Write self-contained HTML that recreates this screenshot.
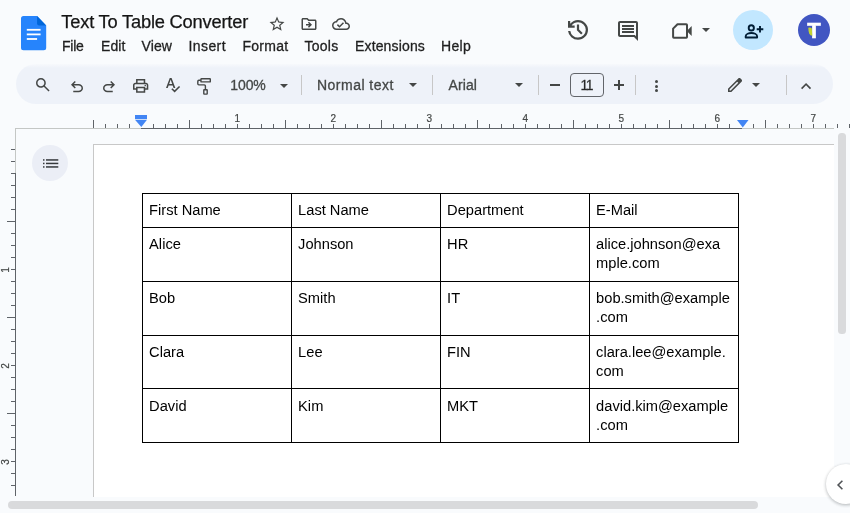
<!DOCTYPE html>
<html><head><meta charset="utf-8"><title>Text To Table Converter</title>
<style>
*{box-sizing:border-box;margin:0;padding:0}
html,body{width:850px;height:513px;overflow:hidden;background:#f9fbfd}
body{font-family:"Liberation Sans",sans-serif;color:#1f1f1f;position:relative}
#root{position:absolute;left:0;top:0;width:850px;height:513px;overflow:hidden;will-change:transform}
.a{position:absolute;white-space:nowrap}
svg{position:absolute;overflow:visible}
.menu{top:37px;font-size:14px;line-height:18px;color:#1f1f1f;-webkit-text-stroke:0.3px #1f1f1f}
.tb{top:76px;font-size:14px;line-height:18px;color:#444746;-webkit-text-stroke:0.3px #444746}
.sep{width:1px;height:20px;background:#c7c7c7;top:75px}
.ln{background:#000}
#tbl{position:absolute;left:142px;top:193px;width:597px;border-collapse:collapse;table-layout:fixed;font-size:14.6667px;line-height:19px;color:#000}
#tbl col{width:149px}
#tbl td{border:1px solid #000;padding:0 0 0 6.1px;vertical-align:top;white-space:nowrap;overflow:hidden}
.rn{font-size:10px;line-height:10px;color:#444746;-webkit-text-stroke:0.2px #444746}
</style></head><body><div id="root">
<svg style="left:21.400px;top:16px" width="25.200" height="34.200" viewBox="0 0 25.200 34.200">
<path d="M2.500 0H16.100L25.200 9.500V31.700A2.500 2.500 0 0 1 22.700 34.200H2.500A2.500 2.500 0 0 1 0 31.700V2.500A2.500 2.500 0 0 1 2.500 0Z" fill="#2684fc"/>
<path d="M16.100 0L25.200 9.500H18.100A2 2 0 0 1 16.100 7.500Z" fill="#0066da"/>
<rect x="5.800" y="12.900" width="13.800" height="1.800" fill="#fff"/><rect x="5.800" y="17.500" width="13.800" height="1.800" fill="#fff"/><rect x="5.800" y="22.100" width="10.300" height="1.800" fill="#fff"/>
</svg>
<div class="a" id="title" style="left:61.300px;top:10px;font-size:18.300px;line-height:24px;color:#151515;letter-spacing:-0.200px;-webkit-text-stroke:0.25px #151515">Text To Table Converter</div>
<div class="a menu" style="left:62px;letter-spacing:-0.265px">File</div>
<div class="a menu" style="left:101px;letter-spacing:0.093px">Edit</div>
<div class="a menu" style="left:141.5px;letter-spacing:0.103px">View</div>
<div class="a menu" style="left:188.5px;letter-spacing:0.413px">Insert</div>
<div class="a menu" style="left:242.5px;letter-spacing:0.243px">Format</div>
<div class="a menu" style="left:304.5px;letter-spacing:0.262px">Tools</div>
<div class="a menu" style="left:355px;letter-spacing:0.152px">Extensions</div>
<div class="a menu" style="left:441px;letter-spacing:0.300px">Help</div>
<svg style="left:268px;top:15px" width="18" height="18" viewBox="0 0 24 24"><path fill="#444746" d="M22 9.24l-7.190-.62L12 2 9.190 8.630 2 9.240l5.460 4.730L5.820 21 12 17.270 18.180 21l-1.630-7.030L22 9.240zM12 15.400l-3.760 2.270 1-4.280-3.320-2.880 4.380-.38L12 6.100l1.710 4.040 4.380.38-3.320 2.880 1 4.280L12 15.400z"/></svg>
<svg style="left:300px;top:15px" width="18" height="18" viewBox="0 0 24 24"><path fill="#444746" d="M20,6h-8l-2-2H4C2.900,4,2,4.900,2,6v12c0,1.100,0.900,2,2,2h16c1.100,0,2-0.900,2-2V8C22,6.900,21.100,6,20,6z M20,18H4V6h5.170l2,2H20V18z M12.160,12H8v2h4.160l-1.590,1.590L11.990,17L16,13.010L11.990,9l-1.410,1.410L12.160,12z"/></svg>
<svg style="left:332px;top:15px" width="18" height="18" viewBox="0 0 24 24"><path fill="#444746" d="M19.350 10.040C18.670 6.590 15.640 4 12 4 9.110 4 6.600 5.640 5.350 8.040 2.340 8.360 0 10.910 0 14c0 3.310 2.690 6 6 6h13c2.760 0 5-2.240 5-5 0-2.640-2.050-4.780-4.650-4.960zM19 18H6c-2.210 0-4-1.790-4-4 0-2.050 1.530-3.760 3.560-3.970l1.070-.11.5-.95C8.080 7.140 9.940 6 12 6c2.620 0 4.880 1.860 5.390 4.430l.3 1.500 1.530.11c1.560.1 2.780 1.410 2.780 2.960 0 1.650-1.350 3-3 3zm-9-3.820l-2.090-2.090L6.500 13.500 10 17l6.010-6.010-1.410-1.410z"/></svg>
<svg style="left:616px;top:19px" width="24" height="24" viewBox="0 0 24 24"><path fill="#444746" d="M21.990 4c0-1.100-.89-2-1.990-2H4c-1.100 0-2 .9-2 2v12c0 1.100.9 2 2 2h14l4 4-.01-18zM20 4v13.170L18.830 16H4V4h16zM6 12h12v2H6zm0-3h12v2H6zm0-3h12v2H6z"/></svg>
<svg style="left:672px;top:23px" width="21" height="16" viewBox="0 0 21 16"><path fill="none" stroke="#444746" stroke-width="2" stroke-linejoin="round" d="M5.500 1.200H14.300Q15 1.200 15 1.900V14.100Q15 14.800 14.300 14.800H1.800Q1.100 14.800 1.100 14.100V5.600Z"/><path fill="#444746" d="M15.500 7.200L19.700 3.100V12.900L15.500 8.800Z"/></svg>
<svg style="left:702px;top:28px" width="8" height="4" viewBox="0 0 8 4"><path fill="#444746" d="M0 0H8L4 4Z"/></svg>
<div class="a" style="left:733px;top:10px;width:40px;height:40px;border-radius:20px;background:#c2e7ff"></div>
<svg style="left:744px;top:23px" width="20" height="16" viewBox="0 0 20 16"><g fill="none" stroke="#001d35" stroke-width="1.900">
<circle cx="7.300" cy="4.900" r="2.600"/><path d="M1.700 14.500V13.300C1.700 11.100 5 10 7.400 10S13.100 11.100 13.100 13.300V14.500Z" stroke-linejoin="round"/>
<path d="M16 3V9.600M12.700 6.300H19.300"/></g></svg>
<div class="a" style="left:798px;top:14px;width:32px;height:32px;border-radius:16px;background:#4156c2"></div>
<div class="a" style="left:798px;top:14px;width:32px;height:32px;text-align:center;font-weight:bold;font-size:22px;line-height:33px;color:#fff;-webkit-text-stroke:0.600px #fff">T</div>
<svg style="left:807px;top:27px" width="6" height="10" viewBox="0 0 6 10"><path d="M1.300 0.800Q3.500 0.300 4.800 1.200L5.300 8.800Q3.200 8.600 2.300 6.800T1.300 0.800Z" fill="#c3d531"/></svg>
<div class="a" style="left:16px;top:63.500px;width:817px;height:40.200px;border-radius:20px;background:linear-gradient(to bottom,#f7f9fc 0,#eef2f9 4px,#eef2f9 100%)"></div>
<svg style="left:567.9px;top:20.1px" width="20.00" height="19.70" viewBox="120 -840 720 720" preserveAspectRatio="none"><path fill="#444746" d="M480-120q-138 0-240.500-91.500T122-440h82q14 104 92.500 172T480-200q117 0 198.500-81.500T760-480q0-117-81.500-198.500T480-760q-69 0-129 32t-101 88h110v80H120v-240h80v94q51-64 124.500-99T480-840q75 0 140.500 28.500t114 77q48.500 48.500 77 114T840-480q0 75-28.500 140.500t-77 114q-48.500 48.500-114 77T480-120Zm112-192L440-464v-216h80v184l128 128-56 56Z"/></svg>
<svg style="left:36.1px;top:78.1px" width="13.60" height="13.60" viewBox="120 -840 720 720" preserveAspectRatio="none"><path fill="#444746" d="M784-120 532-372q-30 24-69 38t-83 14q-109 0-184.500-75.500T120-580q0-109 75.500-184.500T380-840q109 0 184.500 75.500T640-580q0 44-14 83t-38 69l252 252-56 56ZM380-400q75 0 127.500-52.500T560-580q0-75-52.500-127.500T380-760q-75 0-127.500 52.500T200-580q0 75 52.500 127.500T380-400Z"/></svg>
<svg style="left:71.2px;top:81.2px" width="12.00" height="11.25" viewBox="160 -800 640 600" preserveAspectRatio="none"><path fill="#444746" d="M280-200v-80h284q63 0 109.500-40T720-420q0-60-46.500-100T564-560H312l104 104-56 56-200-200 200-200 56 56-104 104h252q97 0 166.500 63T800-420q0 94-69.500 157T564-200H280Z"/></svg>
<svg style="left:103px;top:81.2px" width="12.00" height="11.25" viewBox="160 -800 640 600" preserveAspectRatio="none"><path fill="#444746" d="M396-200q-97 0-166.500-63T160-420q0-94 69.500-157T396-640h252L544-744l56-56 200 200-200 200-56-56 104-104H396q-63 0-109.500 40T240-420q0 60 46.500 100T396-280h284v80H396Z"/></svg>
<svg style="left:133.3px;top:79.2px" width="15.30" height="13.77" viewBox="80 -840 800 720" preserveAspectRatio="none"><path fill="#444746" d="M640-640v-120H320v120h-80v-200h480v200h-80Zm-480 80h640-640Zm560 100q17 0 28.500-11.500T760-500q0-17-11.500-28.500T720-540q-17 0-28.500 11.500T680-500q0 17 11.500 28.500T720-460Zm-80 260v-160H320v160h320Zm80 80H240v-160H80v-240q0-51 35-85.500t85-34.500h560q51 0 85.500 34.500T880-520v240H720v160Zm80-240v-160q0-17-11.500-28.500T760-560H200q-17 0-28.500 11.500T160-520v160h80v-80h480v80h80Z"/></svg>
<svg style="left:165.9px;top:78.2px" width="14.10" height="14.50" viewBox="120 -840 726 760" preserveAspectRatio="none"><path fill="#444746" d="M564-80 394-250l56-56 114 114 226-226 56 56L564-80ZM120-320l194-520h94l194 520h-92l-46-132H254l-46 132h-88Zm162-208h156l-76-216h-4l-76 216Z"/></svg>
<svg style="left:190px;top:72px" width="30" height="28" viewBox="190 72 30 28"><g fill="none" stroke="#444746" stroke-width="1.400" stroke-linejoin="miter">
<rect x="200.950" y="78.800" width="9.350" height="3.100" rx="0.500"/>
<path d="M200.900 80.300H198.900Q197.800 80.300 197.800 81.400V83.800Q197.800 84.900 198.900 84.900H204.300Q205.400 84.900 205.400 86V89.400"/>
<rect x="203.800" y="89.700" width="3.400" height="4.400" rx="0.400"/></g></svg>
<div class="a tb" id="zoom" style="left:230.300px;letter-spacing:-0.100px">100%</div>
<svg style="left:279.8px;top:83.5px" width="8" height="4" viewBox="0 0 8 4"><path fill="#444746" d="M0 0H8L4 4Z"/></svg>
<div class="a sep" style="left:301px"></div>
<div class="a tb" id="ntext" style="left:317px;letter-spacing:0.480px">Normal text</div>
<svg style="left:409px;top:82.7px" width="8" height="4" viewBox="0 0 8 4"><path fill="#444746" d="M0 0H8L4 4Z"/></svg>
<div class="a sep" style="left:432px"></div>
<div class="a tb" id="arial" style="left:448.500px;letter-spacing:0.100px">Arial</div>
<svg style="left:514.5px;top:82.7px" width="8" height="4" viewBox="0 0 8 4"><path fill="#444746" d="M0 0H8L4 4Z"/></svg>
<div class="a sep" style="left:538px"></div>
<div class="a" style="left:550px;top:84.250px;width:10px;height:1.500px;background:#444746"></div>
<div class="a" style="left:570px;top:73px;width:34px;height:24px;border:1px solid #62656a;border-radius:4px"></div>
<div class="a tb" style="left:570px;width:34px;text-align:center;letter-spacing:-1.500px;text-indent:-1.500px;color:#1f1f1f">11</div>
<div class="a" style="left:614px;top:84.250px;width:10px;height:1.500px;background:#444746"></div>
<div class="a" style="left:618.250px;top:80px;width:1.500px;height:10px;background:#444746"></div>
<div class="a sep" style="left:635px"></div>
<div class="a" style="left:654.500px;top:80.0px;width:3px;height:3px;border-radius:1.500px;background:#444746"></div>
<div class="a" style="left:654.500px;top:84.5px;width:3px;height:3px;border-radius:1.500px;background:#444746"></div>
<div class="a" style="left:654.500px;top:89.0px;width:3px;height:3px;border-radius:1.500px;background:#444746"></div>
<svg style="left:727.9px;top:78px" width="14.00" height="14.00" viewBox="120 -840 720 720" preserveAspectRatio="none"><path fill="#444746" d="M200-200h57l391-391-57-57-391 391v57Zm-80 80v-170l528-527q12-11 26.500-17t30.500-6q16 0 31 6t26 18l55 56q12 11 17.500 26t5.500 30q0 16-5.500 30.500T817-647L290-120H120Zm640-584-56-56 56 56Zm-141 85-28-29 57 57-29-28Z"/></svg>
<svg style="left:752px;top:82.7px" width="8" height="4" viewBox="0 0 8 4"><path fill="#444746" d="M0 0H8L4 4Z"/></svg>
<div class="a sep" style="left:786px"></div>
<svg style="left:801.1px;top:82.7px" width="10.10" height="6.23" viewBox="240 -640 480 296" preserveAspectRatio="none"><path fill="#444746" d="M480-528 296-344l-56-56 240-240 240 240-56 56-184-184Z"/></svg>
<div class="a" style="left:15px;top:128px;width:127px;height:1px;background:#c4c7c5"></div>
<div class="a" style="left:141px;top:128px;width:601px;height:1px;background:#5f6368"></div>
<div class="a" style="left:742px;top:128px;width:92px;height:1px;background:#c4c7c5"></div>
<div class="a" style="left:93px;top:120px;width:1px;height:8px;background:#5f6368"></div>
<div class="a" style="left:105px;top:124px;width:1px;height:4px;background:#5f6368"></div>
<div class="a" style="left:117px;top:124px;width:1px;height:4px;background:#5f6368"></div>
<div class="a" style="left:129px;top:124px;width:1px;height:4px;background:#5f6368"></div>
<div class="a" style="left:153px;top:124px;width:1px;height:4px;background:#5f6368"></div>
<div class="a" style="left:165px;top:124px;width:1px;height:4px;background:#5f6368"></div>
<div class="a" style="left:177px;top:124px;width:1px;height:4px;background:#5f6368"></div>
<div class="a" style="left:189px;top:120px;width:1px;height:8px;background:#5f6368"></div>
<div class="a" style="left:201px;top:124px;width:1px;height:4px;background:#5f6368"></div>
<div class="a" style="left:213px;top:124px;width:1px;height:4px;background:#5f6368"></div>
<div class="a" style="left:225px;top:124px;width:1px;height:4px;background:#5f6368"></div>
<div class="a" style="left:237px;top:124px;width:1px;height:4px;background:#5f6368"></div>
<div class="a rn" style="left:227.2px;top:114px;width:20px;text-align:center">1</div>
<div class="a" style="left:249px;top:124px;width:1px;height:4px;background:#5f6368"></div>
<div class="a" style="left:261px;top:124px;width:1px;height:4px;background:#5f6368"></div>
<div class="a" style="left:273px;top:124px;width:1px;height:4px;background:#5f6368"></div>
<div class="a" style="left:285px;top:120px;width:1px;height:8px;background:#5f6368"></div>
<div class="a" style="left:297px;top:124px;width:1px;height:4px;background:#5f6368"></div>
<div class="a" style="left:309px;top:124px;width:1px;height:4px;background:#5f6368"></div>
<div class="a" style="left:321px;top:124px;width:1px;height:4px;background:#5f6368"></div>
<div class="a" style="left:333px;top:124px;width:1px;height:4px;background:#5f6368"></div>
<div class="a rn" style="left:323.2px;top:114px;width:20px;text-align:center">2</div>
<div class="a" style="left:345px;top:124px;width:1px;height:4px;background:#5f6368"></div>
<div class="a" style="left:357px;top:124px;width:1px;height:4px;background:#5f6368"></div>
<div class="a" style="left:369px;top:124px;width:1px;height:4px;background:#5f6368"></div>
<div class="a" style="left:381px;top:120px;width:1px;height:8px;background:#5f6368"></div>
<div class="a" style="left:393px;top:124px;width:1px;height:4px;background:#5f6368"></div>
<div class="a" style="left:405px;top:124px;width:1px;height:4px;background:#5f6368"></div>
<div class="a" style="left:417px;top:124px;width:1px;height:4px;background:#5f6368"></div>
<div class="a" style="left:429px;top:124px;width:1px;height:4px;background:#5f6368"></div>
<div class="a rn" style="left:419.2px;top:114px;width:20px;text-align:center">3</div>
<div class="a" style="left:441px;top:124px;width:1px;height:4px;background:#5f6368"></div>
<div class="a" style="left:453px;top:124px;width:1px;height:4px;background:#5f6368"></div>
<div class="a" style="left:465px;top:124px;width:1px;height:4px;background:#5f6368"></div>
<div class="a" style="left:477px;top:120px;width:1px;height:8px;background:#5f6368"></div>
<div class="a" style="left:489px;top:124px;width:1px;height:4px;background:#5f6368"></div>
<div class="a" style="left:501px;top:124px;width:1px;height:4px;background:#5f6368"></div>
<div class="a" style="left:513px;top:124px;width:1px;height:4px;background:#5f6368"></div>
<div class="a" style="left:525px;top:124px;width:1px;height:4px;background:#5f6368"></div>
<div class="a rn" style="left:515.2px;top:114px;width:20px;text-align:center">4</div>
<div class="a" style="left:537px;top:124px;width:1px;height:4px;background:#5f6368"></div>
<div class="a" style="left:549px;top:124px;width:1px;height:4px;background:#5f6368"></div>
<div class="a" style="left:561px;top:124px;width:1px;height:4px;background:#5f6368"></div>
<div class="a" style="left:573px;top:120px;width:1px;height:8px;background:#5f6368"></div>
<div class="a" style="left:585px;top:124px;width:1px;height:4px;background:#5f6368"></div>
<div class="a" style="left:597px;top:124px;width:1px;height:4px;background:#5f6368"></div>
<div class="a" style="left:609px;top:124px;width:1px;height:4px;background:#5f6368"></div>
<div class="a" style="left:621px;top:124px;width:1px;height:4px;background:#5f6368"></div>
<div class="a rn" style="left:611.2px;top:114px;width:20px;text-align:center">5</div>
<div class="a" style="left:633px;top:124px;width:1px;height:4px;background:#5f6368"></div>
<div class="a" style="left:645px;top:124px;width:1px;height:4px;background:#5f6368"></div>
<div class="a" style="left:657px;top:124px;width:1px;height:4px;background:#5f6368"></div>
<div class="a" style="left:669px;top:120px;width:1px;height:8px;background:#5f6368"></div>
<div class="a" style="left:681px;top:124px;width:1px;height:4px;background:#5f6368"></div>
<div class="a" style="left:693px;top:124px;width:1px;height:4px;background:#5f6368"></div>
<div class="a" style="left:705px;top:124px;width:1px;height:4px;background:#5f6368"></div>
<div class="a" style="left:717px;top:124px;width:1px;height:4px;background:#5f6368"></div>
<div class="a rn" style="left:707.2px;top:114px;width:20px;text-align:center">6</div>
<div class="a" style="left:729px;top:124px;width:1px;height:4px;background:#5f6368"></div>
<div class="a" style="left:753px;top:124px;width:1px;height:4px;background:#5f6368"></div>
<div class="a" style="left:765px;top:120px;width:1px;height:8px;background:#5f6368"></div>
<div class="a" style="left:777px;top:124px;width:1px;height:4px;background:#5f6368"></div>
<div class="a" style="left:789px;top:124px;width:1px;height:4px;background:#5f6368"></div>
<div class="a" style="left:801px;top:124px;width:1px;height:4px;background:#5f6368"></div>
<div class="a" style="left:813px;top:124px;width:1px;height:4px;background:#5f6368"></div>
<div class="a rn" style="left:803.2px;top:114px;width:20px;text-align:center">7</div>
<div class="a" style="left:825px;top:124px;width:1px;height:4px;background:#5f6368"></div>
<div class="a" style="left:837px;top:124px;width:1px;height:4px;background:#5f6368"></div>
<div class="a" style="left:849px;top:124px;width:1px;height:4px;background:#5f6368"></div>
<svg style="left:135px;top:115px" width="13" height="13" viewBox="0 0 13 13"><rect x="0" y="0" width="12" height="4" fill="#4285f4"/><path d="M0 4.700H12L6.300 12Z" fill="#4285f4"/></svg>
<svg style="left:737px;top:120px" width="12" height="8" viewBox="0 0 12 8"><path d="M0 0H11.500L5.750 7.500Z" fill="#4285f4"/></svg>
<div class="a" style="left:15px;top:128px;width:1px;height:45px;background:#c4c7c5"></div>
<div class="a" style="left:15px;top:173px;width:1px;height:323px;background:#5f6368"></div>
<div class="a" style="left:11px;top:149px;width:4px;height:1px;background:#5f6368"></div>
<div class="a" style="left:11px;top:161px;width:4px;height:1px;background:#5f6368"></div>
<div class="a" style="left:11px;top:173px;width:4px;height:1px;background:#5f6368"></div>
<div class="a" style="left:11px;top:185px;width:4px;height:1px;background:#5f6368"></div>
<div class="a" style="left:11px;top:197px;width:4px;height:1px;background:#5f6368"></div>
<div class="a" style="left:11px;top:209px;width:4px;height:1px;background:#5f6368"></div>
<div class="a" style="left:7px;top:221px;width:8px;height:1px;background:#5f6368"></div>
<div class="a" style="left:11px;top:233px;width:4px;height:1px;background:#5f6368"></div>
<div class="a" style="left:11px;top:245px;width:4px;height:1px;background:#5f6368"></div>
<div class="a" style="left:11px;top:257px;width:4px;height:1px;background:#5f6368"></div>
<div class="a" style="left:11px;top:269px;width:4px;height:1px;background:#5f6368"></div>
<div class="a rn" style="left:-4px;top:264.5px;width:20px;text-align:center;transform:rotate(-90deg)">1</div>
<div class="a" style="left:11px;top:281px;width:4px;height:1px;background:#5f6368"></div>
<div class="a" style="left:11px;top:293px;width:4px;height:1px;background:#5f6368"></div>
<div class="a" style="left:11px;top:305px;width:4px;height:1px;background:#5f6368"></div>
<div class="a" style="left:7px;top:317px;width:8px;height:1px;background:#5f6368"></div>
<div class="a" style="left:11px;top:329px;width:4px;height:1px;background:#5f6368"></div>
<div class="a" style="left:11px;top:341px;width:4px;height:1px;background:#5f6368"></div>
<div class="a" style="left:11px;top:353px;width:4px;height:1px;background:#5f6368"></div>
<div class="a" style="left:11px;top:365px;width:4px;height:1px;background:#5f6368"></div>
<div class="a rn" style="left:-4px;top:360.5px;width:20px;text-align:center;transform:rotate(-90deg)">2</div>
<div class="a" style="left:11px;top:377px;width:4px;height:1px;background:#5f6368"></div>
<div class="a" style="left:11px;top:389px;width:4px;height:1px;background:#5f6368"></div>
<div class="a" style="left:11px;top:401px;width:4px;height:1px;background:#5f6368"></div>
<div class="a" style="left:7px;top:413px;width:8px;height:1px;background:#5f6368"></div>
<div class="a" style="left:11px;top:425px;width:4px;height:1px;background:#5f6368"></div>
<div class="a" style="left:11px;top:437px;width:4px;height:1px;background:#5f6368"></div>
<div class="a" style="left:11px;top:449px;width:4px;height:1px;background:#5f6368"></div>
<div class="a" style="left:11px;top:461px;width:4px;height:1px;background:#5f6368"></div>
<div class="a rn" style="left:-4px;top:456.5px;width:20px;text-align:center;transform:rotate(-90deg)">3</div>
<div class="a" style="left:11px;top:473px;width:4px;height:1px;background:#5f6368"></div>
<div class="a" style="left:11px;top:485px;width:4px;height:1px;background:#5f6368"></div>
<div class="a" style="left:32px;top:145px;width:36px;height:36px;border-radius:18px;background:#ebeef6"></div>
<svg style="left:43px;top:158.700px" width="16" height="9" viewBox="0 0 16 9"><g fill="#36393c"><rect x="0" y="0.200" width="1.500" height="1.500"/><rect x="0" y="3.700" width="1.500" height="1.500"/><rect x="0" y="7.200" width="1.500" height="1.500"/><rect x="3" y="0.200" width="12.300" height="1.500"/><rect x="3" y="3.700" width="12.300" height="1.500"/><rect x="3" y="7.200" width="12.300" height="1.500"/></g></svg>
<div class="a" style="left:93px;top:144px;width:741px;height:353px;background:#fff;border-left:1px solid #c8c8c8;border-top:1px solid #c8c8c8"></div>
<table id="tbl"><colgroup><col><col><col><col></colgroup><tr style="height:34px"><td style="padding-top:7.1px">First Name</td><td style="padding-top:7.1px">Last Name</td><td style="padding-top:7.1px">Department</td><td style="padding-top:7.1px">E-Mail</td></tr><tr style="height:54px"><td style="padding-top:7.1px">Alice</td><td style="padding-top:7.1px">Johnson</td><td style="padding-top:7.1px">HR</td><td style="padding-top:7.1px">alice.johnson@exa<br>mple.com</td></tr><tr style="height:54px"><td style="padding-top:7.1px">Bob</td><td style="padding-top:7.1px">Smith</td><td style="padding-top:7.1px">IT</td><td style="padding-top:7.1px">bob.smith@example<br>.com</td></tr><tr style="height:53px"><td style="padding-top:7.1px">Clara</td><td style="padding-top:7.1px">Lee</td><td style="padding-top:7.1px">FIN</td><td style="padding-top:7.1px">clara.lee@example.<br>com</td></tr><tr style="height:54px"><td style="padding-top:8.1px">David</td><td style="padding-top:8.1px">Kim</td><td style="padding-top:8.1px">MKT</td><td style="padding-top:8.1px">david.kim@example<br>.com</td></tr></table>
<div class="a" style="left:838.400px;top:132.500px;width:7.400px;height:201.500px;border-radius:3.500px;background:#d9dadc"></div>
<div class="a" style="left:0;top:497px;width:850px;height:16px;background:#f9fbfd"></div>
<div class="a" style="left:8px;top:501px;width:750px;height:8px;border-radius:4px;background:#d9dadc"></div>
<div class="a" style="left:826px;top:464px;width:40px;height:40px;border-radius:20px;background:#fff;box-shadow:0 1px 3px rgba(60,64,67,.24),0 1px 3px 1px rgba(60,64,67,.1)"></div>
<svg style="left:836px;top:479px" width="8" height="12" viewBox="0 0 8 12"><path fill="none" stroke="#505356" stroke-width="1.600" d="M6.400 1.700L2.100 5.950L6.400 10.200"/></svg>
</div></body></html>
